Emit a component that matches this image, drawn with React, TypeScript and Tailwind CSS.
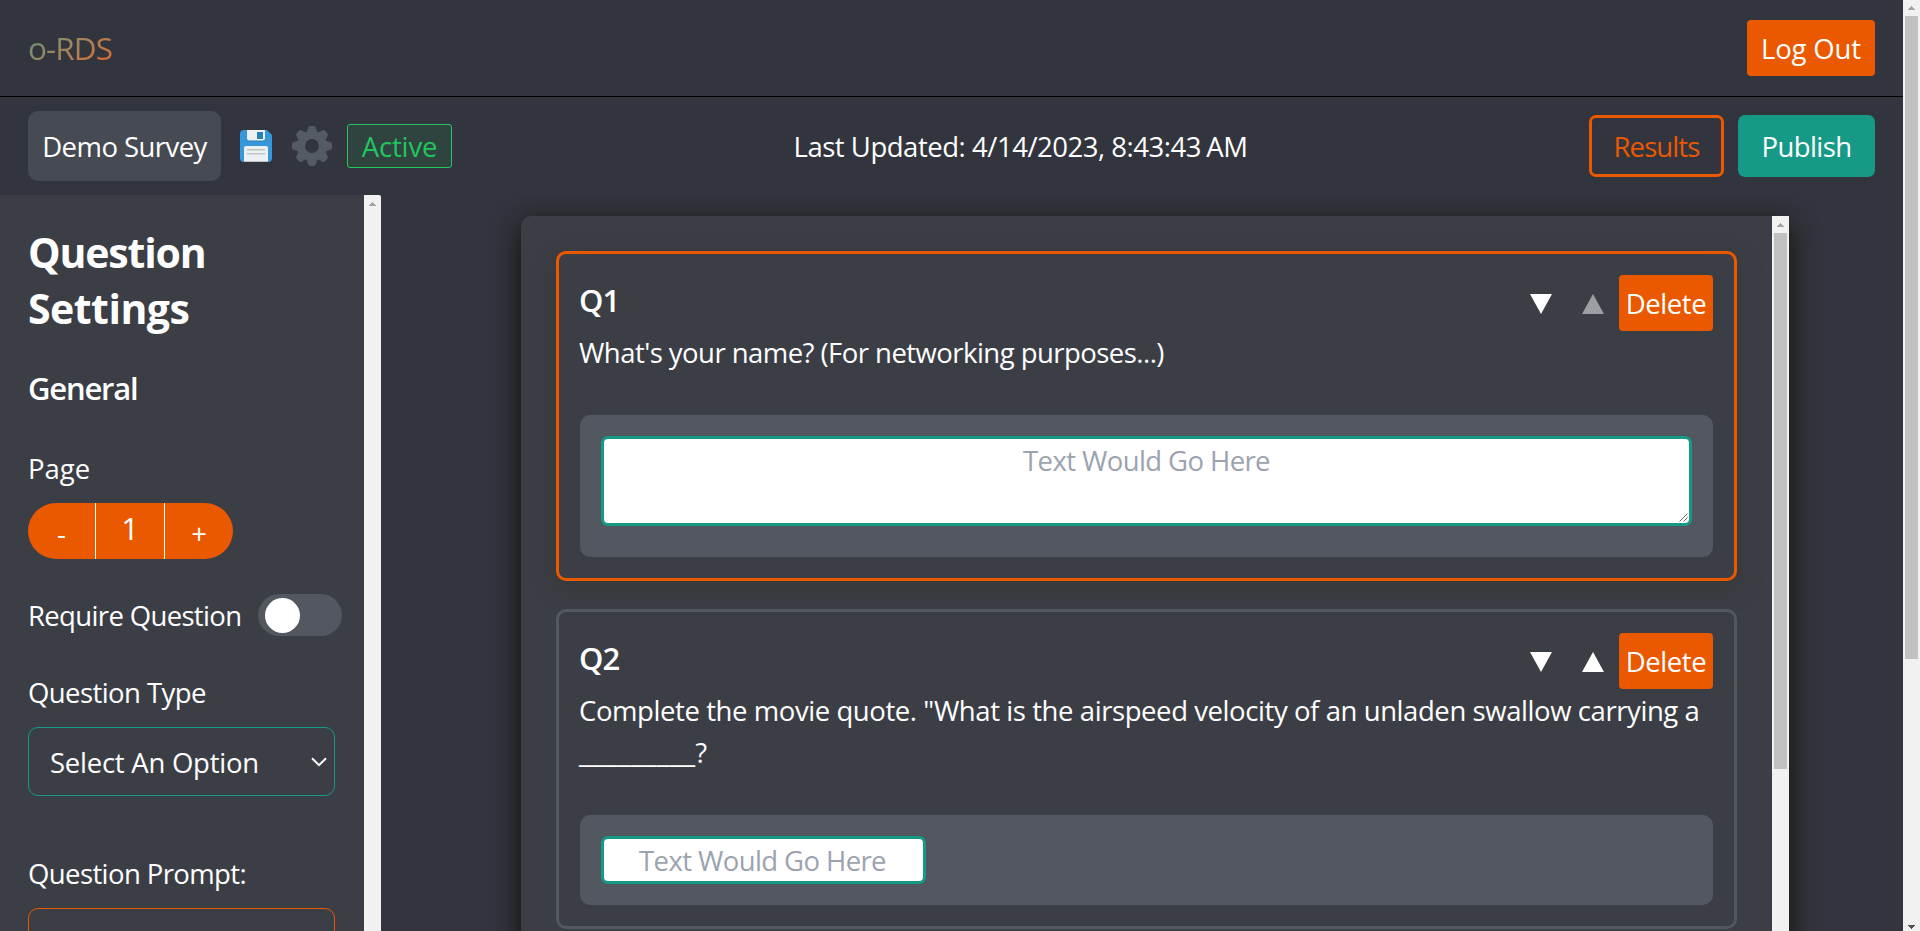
import type { ReactNode } from "react";

function FloppyIcon() {
  return (
    <svg className="h-8 w-8 shrink-0" viewBox="0 0 32 32">
      <path d="M4 0h23l5 5v23a4 4 0 0 1-4 4H4a4 4 0 0 1-4-4V4a4 4 0 0 1 4-4z" fill="#3498db" />
      <path d="M7 0h18v9.500a2 2 0 0 1-2 2H9a2 2 0 0 1-2-2z" fill="#2980b9" />
      <path d="M7 0h18v8.500a2 2 0 0 1-2 2H9a2 2 0 0 1-2-2z" fill="#ecf0f1" />
      <rect x="17" y="2" width="6" height="7" fill="#2980b9" />
      <path d="M4 18a2 2 0 0 1 2-2h20a2 2 0 0 1 2 2v14H4z" fill="#ecf0f1" />
      <path d="M4 31h24v1H4z" fill="#bdc3c7" />
      <path d="M7 19h18v1.500H7zM7 23h18v1.500H7z" fill="#bdc3c7" />
    </svg>
  );
}

const TEETH = [0, 45, 90, 135, 180, 225, 270, 315];

function GearIcon() {
  return (
    <svg className="h-10 w-10 shrink-0" viewBox="-20 -20 40 40">
      <circle r="11" fill="none" stroke="#555b63" strokeWidth="8" />
      {TEETH.map((a) => (
        <path
          key={a}
          d="M-5.500 -13L-3.900 -18Q-3.500 -20 -1.500 -20H1.500Q3.500 -20 3.900 -18L5.500 -13z"
          fill="#555b63"
          transform={`rotate(${a})`}
        />
      ))}
    </svg>
  );
}

function Arrow({ up, muted }: { up?: boolean; muted?: boolean }) {
  return (
    <svg
      className={muted ? "h-5 w-[22px] text-[#9d9ea2]" : "h-5 w-[22px] text-white"}
      viewBox="0 0 22 20"
      fill="currentColor"
    >
      <path d={up ? "M11 0L22 20H0z" : "M0 0H22L11 20z"} />
    </svg>
  );
}

function ScrollArrow({ down }: { down?: boolean }) {
  return (
    <svg
      className={down ? "h-1 w-[7px] text-[#505050]" : "h-1 w-[7px] text-[#a3a3a3]"}
      viewBox="0 0 7 4"
      fill="currentColor"
      shapeRendering="crispEdges"
    >
      <path d={down ? "M0 0h7v1h-1v1h-1v1h-1v1h-1v-1h-1v-1h-1v-1h-1z" : "M3 0h1v1h1v1h1v1h1v1h-7v-1h1v-1h1v-1h1z"} />
    </svg>
  );
}

function QuestionCard({
  label,
  active,
  first,
  prompt,
  children,
}: {
  label: string;
  active?: boolean;
  first?: boolean;
  prompt: ReactNode;
  children: ReactNode;
}) {
  return (
    <section
      className={
        active
          ? "rounded-[10px] border-3 border-[#ea5800] p-[21px] shadow-[0_8px_26px_rgba(48,52,36,0.45)]"
          : "rounded-[10px] border-3 border-[#53575f] p-[21px]"
      }
    >
      <div className="flex h-14 items-start justify-between">
        <h3 className="-ml-px pt-px text-[31px] leading-[49px] font-semibold tracking-[-1px]">{label}</h3>
        <div className="flex items-center">
          <div className="mr-[15px] flex gap-[30px] pt-[2px]">
            <Arrow />
            <Arrow up muted={first} />
          </div>
          <button className="h-14 w-[94px] rounded-[4px] bg-[#ea5800] pt-px tracking-[-0.4px]">Delete</button>
        </div>
      </div>
      <p className="-mr-2 -ml-px h-auto pt-px leading-[42px] tracking-[-0.42px]">{prompt}</p>
      <div className="mt-[41px] rounded-[10px] bg-[#53575f] p-[21px]">{children}</div>
    </section>
  );
}

export default function App() {
  return (
    <div className="flex h-[931px] overflow-hidden bg-[#32353d] font-['Open_Sans','Noto_Sans',sans-serif] text-[27.5px] leading-[42px] text-white">
      <div className="flex min-w-0 flex-1 flex-col">
        <header className="flex h-[97px] shrink-0 items-center justify-between border-b border-black px-7">
          <span className="bg-linear-to-br from-[#169a87] to-[#ea5800] bg-clip-text text-[31.5px] leading-[56px] font-normal tracking-[-0.9px] text-transparent">
            o-RDS
          </span>
          <button className="h-14 w-32 rounded-[4px] bg-[#ea5800] pt-[2px] tracking-[-0.15px]">Log Out</button>
        </header>

        <div className="flex h-[98px] shrink-0 items-center justify-between px-7">
          <div className="flex items-center">
            <div className="flex h-[70px] w-[193px] items-center justify-center rounded-[10px] bg-[#464a52] pt-[2px] tracking-[-0.55px]">
              Demo Survey
            </div>
            <div className="ml-[19px]">
              <FloppyIcon />
            </div>
            <div className="ml-5">
              <GearIcon />
            </div>
            <div className="ml-[15px] flex h-11 w-[105px] items-center justify-center rounded-[3px] border border-[#22c55e] bg-[#2f433f] pt-[2px] tracking-[-0.15px] text-[#22c55e]">
              Active
            </div>
          </div>
          <div className="w-[455px] pt-[2px] text-center tracking-[-0.47px] whitespace-nowrap">
            Last Updated: 4/14/2023, 8:43:43<span className="tracking-[-2px]"> </span>AM
          </div>
          <div className="flex justify-end gap-[14px]">
            <button className="h-[62px] w-[135px] rounded-[7px] border-3 border-[#ea5800] pt-[2px] tracking-[-0.9px] text-[#ea5800]">
              Results
            </button>
            <button className="h-[62px] w-[137px] rounded-[7px] bg-[#169a87] pt-[2px] tracking-[-0.6px]">
              Publish
            </button>
          </div>
        </div>

        <div className="flex min-h-0 flex-1">
          <aside className="flex w-[381px] shrink-0 bg-[#3c3e46]">
            <div className="w-[364px] overflow-hidden pt-[29px] pl-7">
              <h2 className="w-[200px] text-[41px] leading-[56px] font-bold">
                <span className="tracking-[-1.15px]">Question</span> <span className="tracking-[-0.5px]">Settings</span>
              </h2>
              <h3 className="mt-[31px] text-[31px] leading-[42px] font-semibold tracking-[-1.2px]">General</h3>
              <div className="mt-[39px]">Page</div>
              <div className="mt-[13px] flex h-14 w-[205px] overflow-hidden rounded-full bg-[#ea5800] text-center">
                <button className="w-[67px] pt-[5px]">-</button>
                <div className="w-[70px] border-x border-white pt-1 text-[31px]">1</div>
                <button className="flex-1 pt-[6px]">+</button>
              </div>
              <div className="mt-[35px] flex h-[42px] items-center gap-[16px]">
                <span className="w-[214px] pt-[2px] tracking-[-0.65px] whitespace-nowrap">Require Question</span>
                <div className="flex h-[42px] w-[84px] items-center rounded-full bg-[#53575f] pl-[7px]">
                  <div className="h-[35px] w-[35px] rounded-full bg-white" />
                </div>
              </div>
              <div className="mt-9 tracking-[-0.58px]">Question Type</div>
              <div className="mt-[13px] flex h-[69px] w-[307px] items-center justify-between rounded-[10px] border border-[#169a87] pr-[7px] pl-[21px]">
                <span className="pt-[2px] tracking-[-0.25px]">Select An Option</span>
                <svg className="h-[10px] w-4" viewBox="0 0 16 10" fill="none" stroke="white" strokeWidth="2">
                  <path d="M1 1.200L8 8.200L15 1.200" />
                </svg>
              </div>
              <div className="mt-[57px] tracking-[-0.6px]">Question Prompt:</div>
              <div className="mt-[13px] h-[69px] w-[307px] rounded-[10px] border border-[#ea5800]" />
            </div>
            <div className="flex w-[17px] justify-center rounded-tr-[2px] bg-[#f1f1f1] pt-[7px]">
              <ScrollArrow />
            </div>
          </aside>

          <main className="min-w-0 flex-1 overflow-hidden pt-[21px] pl-[140px]">
            <div className="flex h-[760px] w-[1268px] rounded-l-[10px] bg-[#3c3e46] shadow-[0_8px_28px_rgba(18,16,10,1)]">
              <div className="flex flex-1 flex-col gap-7 overflow-hidden rounded-l-[10px] pt-[35px] pr-[35px] pl-[35px]">
                <QuestionCard
                  label="Q1"
                  active
                  first
                  prompt={<span className="tracking-[-0.54px]">What's your name? (For networking purposes...)</span>}
                >
                  <div className="relative mb-[10px] h-[90px] rounded-[7px] border-3 border-[#169a87] bg-white pt-px text-center tracking-[-0.6px] text-[#9ca3af]">
                    Text Would Go Here
                    <svg
                      className="absolute right-px bottom-px h-[9px] w-[9px]"
                      viewBox="0 0 9 9"
                      stroke="#555"
                      strokeWidth="0.9"
                    >
                      <path d="M0.500 8.500L8.500 0.500M4.500 8.500L8.500 4.500" />
                    </svg>
                  </div>
                </QuestionCard>
                <QuestionCard
                  label="Q2"
                  prompt={
                    <>
                      Complete the movie quote. "What is the airspeed velocity of an unladen swallow carrying a{" "}
                      <span className="text-[29.5px] leading-none tracking-normal">_________</span>?
                    </>
                  }
                >
                  <div className="h-12 w-[325px] rounded-[7px] border-3 border-[#169a87] bg-white pt-px pr-[2px] text-center tracking-[-0.6px] text-[#9ca3af]">
                    Text Would Go Here
                  </div>
                </QuestionCard>
              </div>
              <div className="flex w-[17px] flex-col items-center bg-[#f1f1f1] pt-[7px]">
                <ScrollArrow />
                <div className="mt-[6px] h-[536px] w-[13px] bg-[#c1c1c1]" />
              </div>
            </div>
          </main>
        </div>
      </div>

      <div className="flex w-[17px] shrink-0 flex-col items-center bg-[#f1f1f1] pt-[6px] pb-[2px]">
        <ScrollArrow />
        <div className="mt-[6px] h-[643px] w-[13px] bg-[#c1c1c1]" />
        <div className="mt-auto flex">
          <ScrollArrow down />
        </div>
      </div>
    </div>
  );
}
